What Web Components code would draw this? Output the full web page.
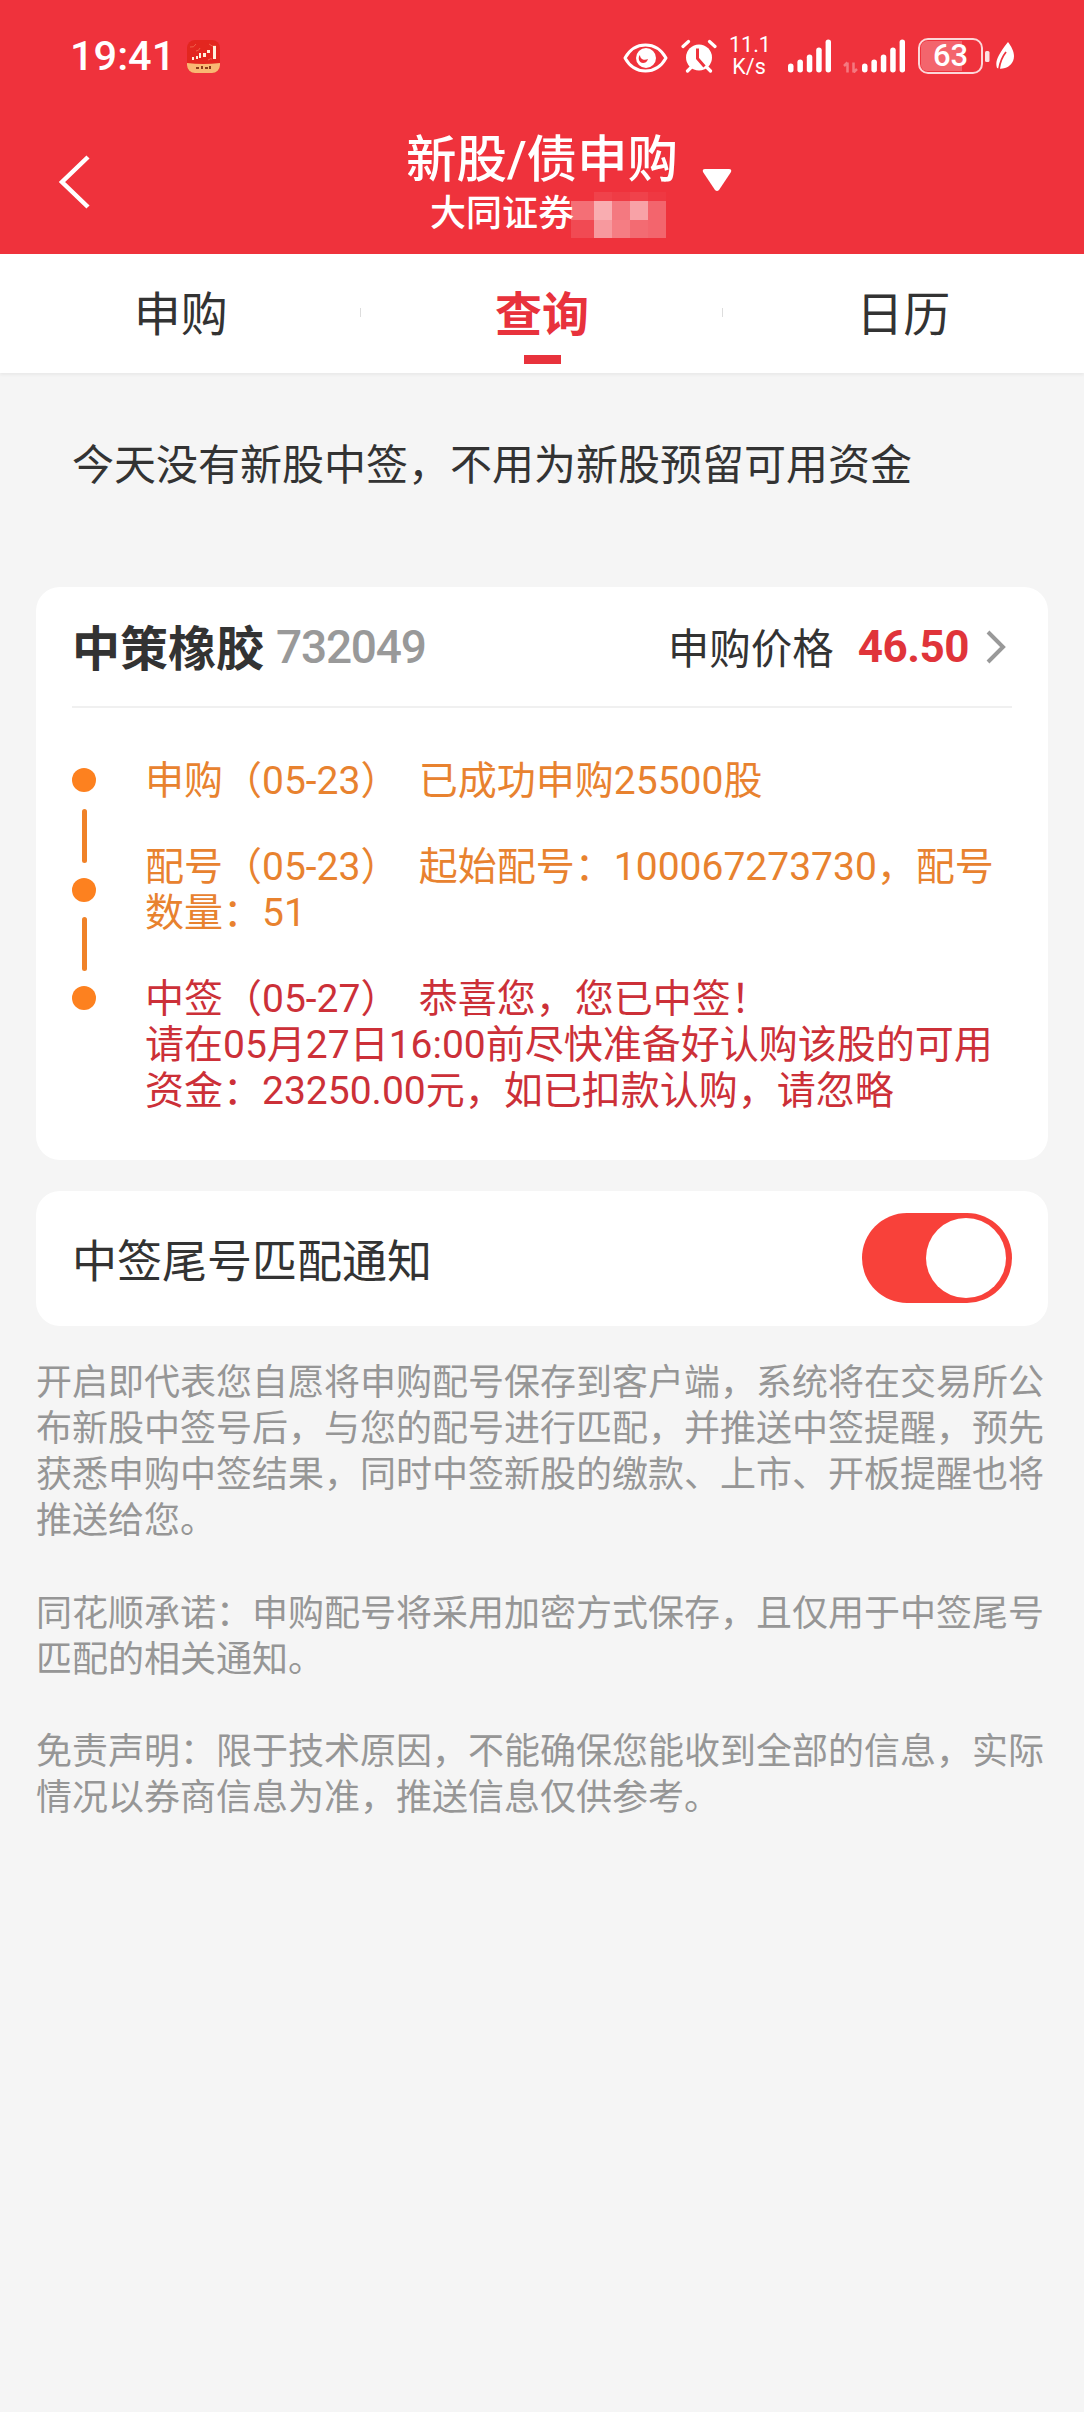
<!DOCTYPE html>
<html lang="zh">
<head>
<meta charset="utf-8">
<title>新股/债申购</title>
<style>
  html, body { margin: 0; padding: 0; }
  body {
    width: 1084px;
    min-height: 2412px;
    background: #f5f5f5;
    font-family: Roboto, "Noto Sans CJK SC", sans-serif;
    color: #333;
  }
</style>
</head>
<body>
  <app-header title="新股/债申购" broker="大同证券"></app-header>
  <tab-bar></tab-bar>
  <notice-line>今天没有新股中签，不用为新股预留可用资金</notice-line>
  <ipo-card name="中策橡胶" code="732049" price="46.50">
    <time-step tone="orange">申购（05-23）&nbsp;&nbsp;已成功申购25500股</time-step>
    <time-step tone="orange" rail="1" center="1">配号（05-23）&nbsp;&nbsp;起始配号：100067273730，配号数量：51</time-step>
    <time-step tone="red" rail="1">中签（05-27）&nbsp;&nbsp;恭喜您，您已中签！<br>请在05月27日16:00前尽快准备好认购该股的可用资金：23250.00元，如已扣款认购，请忽略</time-step>
  </ipo-card>
  <notify-row>中签尾号匹配通知</notify-row>
  <note-text>
    <p>开启即代表您自愿将申购配号保存到客户端，系统将在交易所公布新股中签号后，与您的配号进行匹配，并推送中签提醒，预先获悉申购中签结果，同时中签新股的缴款、上市、开板提醒也将推送给您。</p>
    <p>同花顺承诺：申购配号将采用加密方式保存，且仅用于中签尾号匹配的相关通知。</p>
    <p>免责声明：限于技术原因，不能确保您能收到全部的信息，实际情况以券商信息为准，推送信息仅供参考。</p>
  </note-text>

<script>
class StatusBar extends HTMLElement {
  constructor () {
    super()
    this._shadowRoot = this.attachShadow({ mode: 'open' })
  }

  connectedCallback () {
    const bars = (x) => [9, 13, 18, 25, 33].map((h, i) =>
      `<rect x="${x + i * 9.4}" y="${33.5 - h}" width="5.5" height="${h}" rx="2.75" fill="#fff"/>`).join('')
    this._shadowRoot.innerHTML = `
      <style>
        :host {
          display: flex;
          align-items: center;
          justify-content: space-between;
          height: 112px;
          padding: 0 70px 0 70px;
          color: #fff;
        }
        .left { display: flex; align-items: center; gap: 12px; }
        .time { font-size: 41.5px; line-height: 1; font-weight: 500; }
        .right { display: flex; align-items: center; }
        .net { font-size: 21.5px; line-height: 22px; text-align: center; width: 40px; margin: 0 19px 0 12px; }
        .net span { display: block; }
        .batt {
          position: relative;
          box-sizing: border-box;
          width: 65px;
          height: 36px;
          border: 2.5px solid rgba(255,255,255,.8);
          border-radius: 10px;
          margin-left: 13px;
          font-size: 31px;
          line-height: 31px;
          text-align: center;
        }
        .batt i {
          position: absolute;
          left: 1px;
          top: 1px;
          bottom: 1px;
          width: 41px;
          border-radius: 6px 0 0 6px;
          background: rgba(255,255,255,.25);
        }
        .batt b { position: relative; font-weight: 500; }
        svg { display: block; }
      </style>
      <div class="left">
        <span class="time">19:41</span>
        <svg width="33" height="33" viewBox="0 0 33 33">
          <rect width="33" height="33" rx="8" fill="#e3261f"/>
          <path d="M3 7q4 1 6-3M22 4q3 3 7 2M9 11q3 0 4-3M21 20q3-2 4-1" fill="none" stroke="#f0604a" stroke-width="1"/>
          <path d="M0 23q16 2 33 0v2a8 8 0 0 1-8 8H8a8 8 0 0 1-8-8z" fill="#f9b873"/>
          <path d="M5 17h2v3H5zM9 16h2v3H9zM12 13h2v5h-2zM16 13h3v4h-3zM20 10h3v3h-3zM26 6h3v13h-3z" fill="#fff0dc"/>
          <path d="M9 27h3v2H9zM14 26h2v3h-2zM18 27h3v2h-3zM22 26h2v3h-2z" fill="#8a3a1c"/>
        </svg>
      </div>
      <div class="right">
        <svg width="45" height="30" viewBox="0 0 45 30" style="margin-top:3px">
          <path d="M2 15C7 6 14 2 22.5 2S38 6 43 15c-5 9-12 13-20.5 13S7 24 2 15z" fill="none" stroke="#fff" stroke-width="3" stroke-linejoin="round"/>
          <circle cx="23" cy="15" r="10" fill="#fff"/>
          <path d="M16 13.5a3.500 3.500 0 0 1 1-1.500c0 4 4 6 8 4-1 3-3 4-5 4-3 0-5-3-4-6.500z" fill="#ef323c"/>
        </svg>
        <svg width="36" height="34" viewBox="0 0 36 34" style="margin-left:13px">
          <circle cx="18" cy="18.5" r="13" fill="#fff"/>
          <path d="M2 7.500 7.500 2.500M34 7.500 28.500 2.500M6.500 32l3.500-3.500M29.500 32 26 28.500" stroke="#fff" stroke-width="3.2" stroke-linecap="round"/>
          <path d="M16.500 9.500v10l7 8" fill="none" stroke="#ef323c" stroke-width="3"/>
        </svg>
        <div class="net"><span>11.1</span><span>K/s</span></div>
        <svg width="43" height="34" viewBox="0 0 43 34">${bars(0)}</svg>
        <svg width="62" height="34" viewBox="0 0 62 34" style="margin-left:12px">
          <path d="M4.500 33.500v-10M1 27l3.500-3.500M10.500 23.500v10M14 30l-3.500 3.500" stroke="rgba(255,255,255,.35)" stroke-width="2.5" fill="none"/>
          ${bars(19)}
        </svg>
        <div class="batt"><i></i><b>63</b></div>
        <svg width="5" height="11" viewBox="0 0 5 11" style="margin-left:2px"><rect width="4.5" height="11" rx="1.5" fill="rgba(255,255,255,.85)"/></svg>
        <svg width="18" height="28" viewBox="0 0 18 28" style="margin-left:6px">
          <path d="M12 0c3 4 6 9 6 14 0 7-5 11-9 12-3 1-6 1-8 0-2-6 0-12 11-26z" fill="#fff"/>
          <path d="M3 27c1-7 3-12 7-17" fill="none" stroke="#ef323c" stroke-width="1.8"/>
        </svg>
      </div>`
  }
}
customElements.define('status-bar', StatusBar)

class AppHeader extends HTMLElement {
  constructor () {
    super()
    this._shadowRoot = this.attachShadow({ mode: 'open' })
  }

  connectedCallback () {
    const title = this.getAttribute('title')
    const broker = this.getAttribute('broker')
    const cells = [
      0, 0.08, 0.05, 0.08, 0.03,
      0.3, 0.6, 0.35, 0.55, 0.25,
      0.12, 0.5, 0.37, 0.28, 0.25
    ].map(o => `<i style="opacity:${o}"></i>`).join('')
    this._shadowRoot.innerHTML = `
      <style>
        :host { display: block; background: #ef323c; height: 254px; color: #fff; }
        .nav { position: relative; display: flex; flex-direction: column; align-items: center; height: 142px; box-sizing: border-box; padding-top: 18px; }
        .back { position: absolute; left: 58px; top: 42px; }
        h1 { margin: 0; font-size: 50.5px; font-weight: 500; line-height: 60px; position: relative; }
        h1 svg { position: absolute; left: 295px; top: 37px; }
        .sub { display: flex; align-items: flex-start; font-size: 36px; line-height: 44px; font-weight: 500; margin: 2px 0 0 12px; }
        .mosaic { display: grid; grid-template-columns: 23px repeat(4, 18px); grid-template-rows: 9px 19px 18px; margin: 0 0 0 -3px; }
        .mosaic i { background: #fff; }
      </style>
      <status-bar></status-bar>
      <div class="nav">
        <svg class="back" width="34" height="56" viewBox="0 0 34 56"><path d="M30 3 4 28l26 25" fill="none" stroke="#fff" stroke-width="4.5"/></svg>
        <h1>${title}<svg width="32" height="26" viewBox="0 0 32 26"><path d="M4 2h24q3 0 2 3L18 23q-2 2-4 0L2 5q-1-3 2-3z" fill="#fff"/></svg></h1>
        <div class="sub"><span>${broker}</span><div class="mosaic">${cells}</div></div>
      </div>`
  }
}
customElements.define('app-header', AppHeader)

class TabBar extends HTMLElement {
  constructor () {
    super()
    this._shadowRoot = this.attachShadow({ mode: 'open' })
  }

  connectedCallback () {
    this._shadowRoot.innerHTML = `
      <style>
        :host {
          display: grid;
          grid-template-columns: repeat(3, 1fr);
          height: 119px;
          background: #fff;
          box-shadow: 0 2px 3px rgba(0,0,0,.05);
          font-size: 47px;
        }
        div { position: relative; display: flex; align-items: center; justify-content: center; padding-bottom: 7px; }
        div + div::before {
          content: '';
          position: absolute;
          left: -1px;
          top: 54px;
          height: 9px;
          width: 1px;
          background: #ddd;
        }
        .on { color: #e8323c; font-weight: 700; }
        .on::after {
          content: '';
          position: absolute;
          bottom: 9px;
          left: 50%;
          width: 37px;
          height: 9px;
          margin-left: -18px;
          background: #e8323c;
        }
      </style>
      <div>申购</div>
      <div class="on">查询</div>
      <div>日历</div>`
  }
}
customElements.define('tab-bar', TabBar)

class NoticeLine extends HTMLElement {
  constructor () {
    super()
    this.attachShadow({ mode: 'open' }).innerHTML = `
      <style>
        :host { display: block; padding: 65px 0 61px 72px; font-size: 42px; line-height: 56px; height: 88px; color: #333; white-space: nowrap; }
      </style>
      <slot></slot>`
  }
}
customElements.define('notice-line', NoticeLine)

class IpoCard extends HTMLElement {
  constructor () {
    super()
    this._shadowRoot = this.attachShadow({ mode: 'open' })
  }

  connectedCallback () {
    const name = this.getAttribute('name')
    const code = this.getAttribute('code')
    const price = this.getAttribute('price')
    this._shadowRoot.innerHTML = `
      <style>
        :host {
          display: block;
          margin: 0 36px;
          background: #fff;
          border-radius: 24px;
          padding: 0 36px;
          height: 573px;
          box-sizing: border-box;
        }
        .head {
          display: flex;
          align-items: center;
          height: 121px;
          border-bottom: 2px solid #f0f0f0;
          box-sizing: border-box;
        }
        .name { font-size: 48px; font-weight: 700; margin-bottom: 3px; }
        .code { font-size: 46px; font-weight: 500; color: #999; letter-spacing: -1.2px; margin-left: 12px; }
        .label { margin-left: auto; font-size: 41.5px; margin-bottom: 2px; }
        .price { font-size: 44px; font-weight: 700; color: #e0343a; letter-spacing: -.5px; margin-left: 24px; }
        .head svg { margin-left: 17px; margin-right: 6px; }
        .steps { padding-top: 49px; }
      </style>
      <div class="head">
        <span class="name">${name}</span>
        <span class="code">${code}</span>
        <span class="label">申购价格</span>
        <span class="price">${price}</span>
        <svg width="20" height="34" viewBox="0 0 20 34"><path d="M2 2l15 15L2 32" fill="none" stroke="#999" stroke-width="4"/></svg>
      </div>
      <div class="steps"><slot></slot></div>`
  }
}
customElements.define('ipo-card', IpoCard)

class TimeStep extends HTMLElement {
  constructor () {
    super()
    this._shadowRoot = this.attachShadow({ mode: 'open' })
  }

  connectedCallback () {
    const tone = this.getAttribute('tone') === 'red' ? '#cc3038' : '#e8822f'
    const rail = this.getAttribute('rail') === '1'
    const center = this.getAttribute('center') === '1'
    this._shadowRoot.innerHTML = `
      <style>
        :host {
          display: flex;
          font-size: 39px;
          line-height: 46px;
          color: ${tone};
          margin-bottom: 39px;
        }
        .rail { display: flex; align-items: ${center ? 'center' : 'flex-start'}; flex: none; width: 73px; box-sizing: border-box; padding-top: ${center ? 0 : 11}px; }
        .dot { position: relative; width: 24px; height: 24px; border-radius: 50%; background: #fd811f; }
        .line { position: absolute; left: 9.5px; bottom: 39px; width: 5px; height: 54px; border-radius: 3px; background: #f08228; }
        .text { flex: 1; padding-right: 14px; margin-top: 1px; }
      </style>
      <div class="rail"><span class="dot">${rail ? '<span class="line"></span>' : ''}</span></div>
      <div class="text"><slot></slot></div>`
  }
}
customElements.define('time-step', TimeStep)

class NotifyRow extends HTMLElement {
  constructor () {
    super()
    this.attachShadow({ mode: 'open' }).innerHTML = `
      <style>
        :host {
          display: flex;
          align-items: center;
          justify-content: space-between;
          margin: 31px 36px 0;
          height: 135px;
          padding: 0 36px;
          background: #fff;
          border-radius: 24px;
          font-size: 45px;
        }
        .switch {
          position: relative;
          box-sizing: border-box;
          width: 150px;
          height: 90px;
          margin-bottom: 2px;
          border-radius: 45px;
          background: #f8413a;
        }
        .switch::after {
          content: '';
          position: absolute;
          right: 6px;
          top: 5px;
          width: 80px;
          height: 80px;
          border-radius: 50%;
          background: #fff;
        }
      </style>
      <slot></slot>
      <div class="switch"></div>`
  }
}
customElements.define('notify-row', NotifyRow)

class NoteText extends HTMLElement {
  constructor () {
    super()
    this.attachShadow({ mode: 'open' }).innerHTML = `
      <style>
        :host { display: flex; flex-direction: column; gap: 46.5px; padding: 34px 36px 0; font-size: 36px; line-height: 46px; color: #969696; }
        ::slotted(p) { margin: 0; }
      </style>
      <slot></slot>`
  }
}
customElements.define('note-text', NoteText)
</script>
</body>
</html>
